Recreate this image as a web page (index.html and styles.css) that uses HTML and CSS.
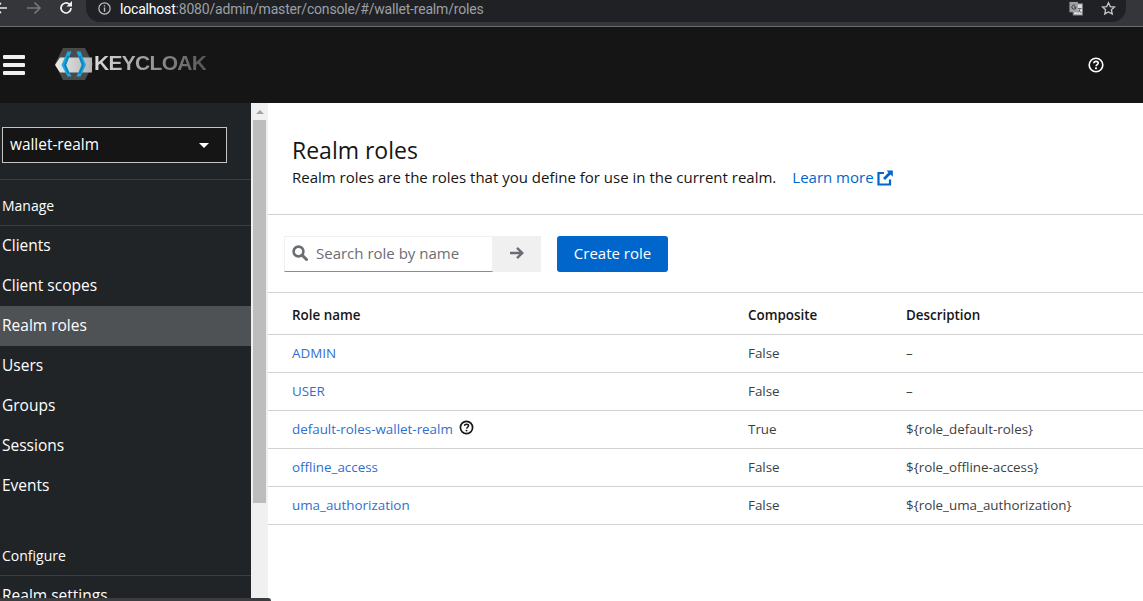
FILE: index.html
```html
<!DOCTYPE html>
<html lang="en">
<head>
<meta charset="utf-8">
<title>Keycloak - Realm roles</title>
<link rel="stylesheet" href="styles.css">
</head>
<body>
<div class="page">
  <header class="chrome">
    <div class="nav-buttons">
      <svg class="nav-icon back" viewBox="0 0 16 16"><path d="M14 8H3M8 3L3 8l5 5" fill="none" stroke="#e8eaed" stroke-width="1.6"/></svg>
      <svg class="nav-icon fwd" viewBox="0 0 16 16"><path d="M1 8h13M8.500 2.500L14 8l-5.500 5.500" fill="none" stroke="#75777a" stroke-width="1.600"/></svg>
      <svg class="nav-icon reload" viewBox="0 0 16 16"><path d="M13 8a5 5 0 1 1-1.500-3.600" fill="none" stroke="#f1f3f4" stroke-width="1.700"/><path d="M14 1v5.500H8.500z" fill="#f1f3f4"/></svg>
    </div>
    <div class="omnibox">
      <svg class="info" viewBox="0 0 16 16"><circle cx="8" cy="8" r="6" fill="none" stroke="#bdc1c6" stroke-width="1.300"/><path d="M8 7v4.500M8 4.500v1.300" stroke="#bdc1c6" stroke-width="1.500"/></svg>
      <span class="url"><span class="host">localhost</span>:8080/admin/master/console/#/wallet-realm/roles</span>
      <span class="omni-right">
        <svg class="translate" viewBox="0 0 16 16"><rect x="5" y="3" width="10" height="12" fill="#dadce0" stroke="#777"/><rect x="1" y="1" width="9" height="11" fill="#9aa0a6"/><path d="M8 6.500a2.200 2.200 0 1 1-.8-1.700M5.800 6.500H8" fill="none" stroke="#3a3b3e"/><path d="M10 8h4M12 8c0 2-1 4-2 4.500M11 9.500c.5 1.500 1.500 2.500 3 3" fill="none" stroke="#333" stroke-width=".7"/></svg>
        <svg class="star" viewBox="0 0 16 16"><path d="M8 1.800l1.900 4.100 4.500.5-3.300 3 .9 4.400L8 11.600l-4 2.200.9-4.400-3.300-3 4.500-.5z" fill="none" stroke="#c4c7ca" stroke-width="1.400"/></svg>
      </span>
    </div>
    <span class="chrome-end"></span>
  </header>

  <div class="masthead">
    <div class="burger"><span></span><span></span><span></span></div>
    <div class="logo">
      <svg class="logo-mark" viewBox="0 0 40 32">
        <defs>
          <linearGradient id="logoBar" x1="0" x2="1" y1="0" y2="0"><stop offset="0" stop-color="#ececec"/><stop offset="1" stop-color="#b4b4b4"/></linearGradient>
        </defs>
        <path d="M8 0h22l8 16-8 16H8L0 16z" fill="#4a4a4a"/>
        <path d="M0 17L5 9.500h32v15H5z" fill="url(#logoBar)"/>
        <path d="M12.500 3.500h4L11 17l5.500 11.500h-4L6.500 17z" fill="#1aa9e3"/>
        <path d="M21.500 3.500h4L31 17l-5.500 11.500h-4L26.500 17z" fill="#1aa9e3"/>
        <path d="M12.500 7.500l2 .5L11 17l3.500 8.500-2 .5L9 17z" fill="#0f84b8"/>
        <path d="M25.500 7.500l-2 .5L27 17l-3.500 8.500 2 .5L29 17z" fill="#0f84b8"/>
      </svg>
      <span class="logo-text">KEYCLOAK</span>
    </div>
    <svg class="help-top" viewBox="0 0 16 16"><circle cx="8" cy="8" r="6.800" fill="none" stroke="#fff" stroke-width="1.600"/><path d="M5.800 6.300C5.900 5 6.800 4.400 8 4.400c1.300 0 2.200.7 2.200 1.800 0 1.500-2 1.500-2.100 3" fill="none" stroke="#fff" stroke-width="1.600"/><circle cx="8" cy="11.300" r="1.100" fill="#fff"/></svg>
  </div>

  <div class="workspace">
    <aside class="sidebar">
      <div class="realm-wrap">
        <div class="realm-select"><span>wallet-realm</span><i class="caret"></i></div>
      </div>
      <div class="nav-group">Manage</div>
      <nav class="nav-list">
        <a class="nav-item">Clients</a>
        <a class="nav-item">Client scopes</a>
        <a class="nav-item current">Realm roles</a>
        <a class="nav-item">Users</a>
        <a class="nav-item">Groups</a>
        <a class="nav-item">Sessions</a>
        <a class="nav-item">Events</a>
      </nav>
      <div class="nav-group configure">Configure</div>
      <nav class="nav-list">
        <a class="nav-item">Realm settings</a>
      </nav>
    </aside>
    <div class="scrollbar">
      <i class="scroll-arrow"></i>
      <div class="scroll-thumb"></div>
    </div>
    <main class="content">
      <section class="page-head">
        <h1>Realm roles</h1>
        <p>Realm roles are the roles that you define for use in the current realm.<a class="learn">Learn more<svg class="ext" viewBox="0 0 16 16"><path d="M13 9.500V14.500H1.500V3H7" fill="none" stroke="#06c" stroke-width="2.200"/><path d="M9.500 .5H15.800V6.800L13.500 4.600 8 10 6 8l5.500-5.400z" fill="#06c"/></svg></a></p>
      </section>
      <section class="toolbar">
        <div class="search">
          <svg class="search-icon" viewBox="0 0 16 16"><circle cx="6.500" cy="6.500" r="4.900" fill="none" stroke="#6a6e73" stroke-width="2.600"/><path d="M10 10l4.500 4.500" stroke="#6a6e73" stroke-width="3" stroke-linecap="round"/></svg>
          <span class="placeholder">Search role by name</span>
        </div>
        <div class="search-go"><svg viewBox="0 0 16 16"><path d="M1 8h12.500M8 2.800L13.300 8 8 13.200" fill="none" stroke="#6a6e73" stroke-width="2.400"/></svg></div>
        <button class="primary">Create role</button>
      </section>
      <table class="roles">
        <thead>
          <tr><th class="c1">Role name</th><th class="c2">Composite</th><th>Description</th></tr>
        </thead>
        <tbody>
          <tr><td><a>ADMIN</a></td><td>False</td><td>–</td></tr>
          <tr><td><a>USER</a></td><td>False</td><td>–</td></tr>
          <tr><td><a>default-roles-wallet-realm</a><svg class="help-row" viewBox="0 0 16 16"><circle cx="8" cy="8" r="6.500" fill="none" stroke="#151515" stroke-width="1.800"/><path d="M5.800 6.300C5.900 5 6.800 4.400 8 4.400c1.300 0 2.200.7 2.200 1.800 0 1.500-2 1.500-2.100 3" fill="none" stroke="#151515" stroke-width="1.600"/><circle cx="8" cy="11.300" r="1" fill="#151515"/></svg></td><td>True</td><td>${role_default-roles}</td></tr>
          <tr><td><a>offline_access</a></td><td>False</td><td>${role_offline-access}</td></tr>
          <tr><td><a>uma_authorization</a></td><td>False</td><td>${role_uma_authorization}</td></tr>
        </tbody>
      </table>
    </main>
  </div>
  <div class="taskbar-edge"></div>
</div>
</body>
</html>
```
FILE: styles.css
```css
* { box-sizing: border-box; }
html, body { margin: 0; height: 100%; overflow: hidden; }
body { font-family: "Open Sans", "Liberation Sans", sans-serif; color: #151515; background: #fff; }
.page { position: relative; width: 1143px; height: 601px; display: flex; flex-direction: column; overflow: hidden; }

/* browser chrome */
.chrome { height: 27px; flex: none; display: flex; align-items: flex-start; background: #35363a; border-bottom: 1px solid #6c6d70; }
.nav-buttons { width: 86px; height: 16px; position: relative; display: flex; flex: none; }
.nav-icon { width: 16px; height: 16px; flex: none; }
.back { margin-left: -7px; }
.fwd { margin-left: 17px; }
.reload { margin-left: 16px; }
.omnibox { flex: 1; height: 22px; background: #202124; border-radius: 0 0 14px 14px; display: flex; align-items: center; padding: 0 10px 5px 11px; }
.info { width: 15px; height: 15px; flex: none; }
.url { margin-left: 8px; font-size: 14px; color: #9aa0a6; white-space: nowrap; font-family: "Roboto", sans-serif; letter-spacing: -.19px; }
.host { color: #fff; }
.omni-right { margin-left: auto; display: flex; align-items: center; gap: 17px; }
.translate { width: 16px; height: 15px; }
.star { width: 15px; height: 15px; }
.chrome-end { width: 17px; flex: none; }

/* masthead */
.masthead { height: 76px; flex: none; background: #151515; display: flex; align-items: center; position: relative; }
.burger { width: 22px; margin-left: 3px; display: flex; flex-direction: column; gap: 4px; flex: none; }
.burger span { display: block; height: 4px; background: #f0f0f0; border-radius: 1px; }
.logo { margin-left: 30px; margin-bottom: 3px; display: flex; align-items: center; }
.logo-mark { width: 40px; height: 32px; flex: none; }
.logo-text { font-family: "Liberation Sans", sans-serif; font-weight: 700; font-size: 21px; letter-spacing: -.7px; margin-left: -1px; margin-top: -1px; background: linear-gradient(90deg, #dcdcdc, #555); -webkit-background-clip: text; background-clip: text; color: transparent; }
.help-top { width: 16px; height: 16px; margin-left: auto; margin-right: 39px; flex: none; }

/* workspace */
.workspace { flex: 1; min-height: 0; display: flex; }
.sidebar { width: 251px; flex: none; background: #212427; color: #fff; overflow: hidden; }
.realm-wrap { padding: 24px 24px 16px 2px; border-bottom: 1px solid #3c3f42; height: 77px; }
.realm-select { height: 36px; background: #151515; border: 1px solid #c4c4c4; display: flex; align-items: center; justify-content: space-between; padding: 0 17px 2px 7px; font-size: 15.4px; }
.caret { width: 0; height: 0; border-left: 5px solid transparent; border-right: 5px solid transparent; border-top: 5px solid #fff; margin-top: 2px; }
.nav-group { height: 46px; padding: 5px 2px 0; display: flex; align-items: center; font-size: 14px; border-bottom: 1px solid #3c3f42; }
.configure { height: 49px; margin-top: 21px; padding-top: 9px; }
.nav-list { display: flex; flex-direction: column; }
.nav-item { height: 40px; display: flex; align-items: center; padding: 0 2px 2px; font-size: 15.5px; white-space: nowrap; }
.current { background: #4f5255; }

/* fake scrollbar */
.scrollbar { width: 17px; flex: none; background: #f0f0f0; padding: 0 2px; position: relative; }
.scroll-arrow { display: block; width: 0; height: 0; margin: 7px auto 6px; border-left: 4px solid transparent; border-right: 4px solid transparent; border-bottom: 4px solid #a3a3a3; }
.scroll-thumb { height: 383px; background: #bdbdbd; }

/* content */
.content { flex: 1; min-width: 0; background: #fff; }
.page-head { height: 112px; padding: 33px 24px 0; border-bottom: 1px solid #d2d2d2; }
h1 { margin: 0; font-size: 23px; font-weight: 400; line-height: 29px; }
.page-head p { margin: 2px 0 0; font-size: 15px; line-height: 21px; white-space: nowrap; display: flex; align-items: center; }
.learn { color: #06c; margin-left: 16px; display: inline-flex; align-items: center; }
.ext { width: 16px; height: 16px; margin-left: 3px; }

.toolbar { height: 78px; display: flex; align-items: flex-start; padding: 21px 0 0 16px; border-bottom: 1px solid #d2d2d2; }
.search { width: 209px; height: 36px; border: 1px solid #f0f0f0; border-bottom: 1px solid #8a8d90; display: flex; align-items: center; padding: 0 0 2px 7px; }
.search-icon { width: 16px; height: 16px; flex: none; }
.placeholder { margin-left: 8px; font-size: 15px; color: #6a6e73; white-space: nowrap; }
.search-go { width: 48px; height: 36px; background: #f0f0f0; display: flex; align-items: center; justify-content: center; padding-bottom: 2px; }
.search-go svg { width: 16px; height: 16px; }
.primary { margin-left: 16px; width: 111px; height: 36px; background: #06c; color: #fff; border: 0; border-radius: 3px; font: inherit; font-size: 15px; padding: 0 0 2px; }

.roles { width: 875px; border-collapse: collapse; table-layout: fixed; font-size: 13.4px; }
.roles th, .roles td { padding: 0 0 0 24px; text-align: left; border-bottom: 1px solid #d2d2d2; white-space: nowrap; }
.roles th { height: 41px; font-weight: 600; font-size: 13.4px; padding-top: 3px; }
.roles td { height: 38px; color: #3c3f42; }
.roles a { color: #2f6fd0; }
.c1 { width: 456px; }
.c2 { width: 158px; }
.help-row { width: 15px; height: 15px; margin: -4px 0 -4px 6px; vertical-align: 3px; }

.taskbar-edge { position: absolute; left: 0; bottom: 0; width: 271px; height: 3px; background: #3a3c3f; border-radius: 0 3px 0 0; }
```
